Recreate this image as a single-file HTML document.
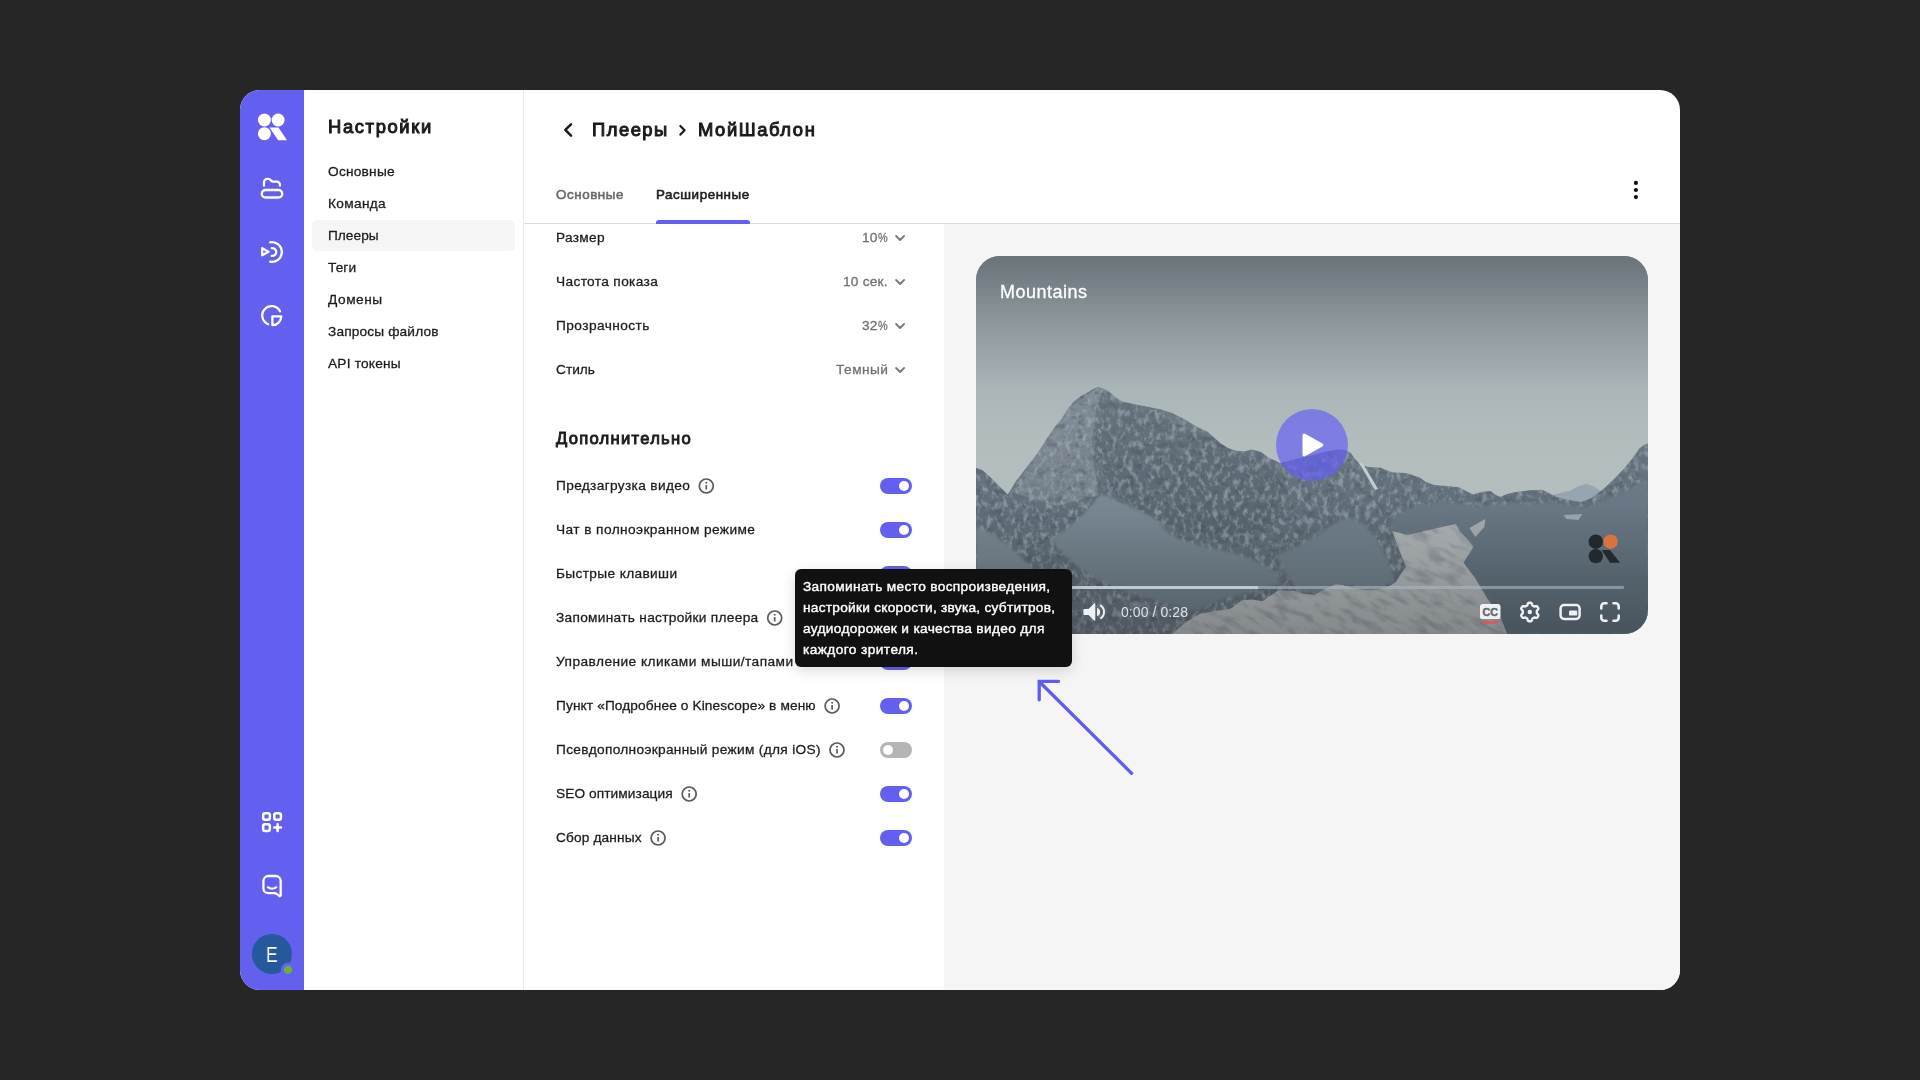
<!DOCTYPE html>
<html lang="ru"><head><meta charset="utf-8"><title>Kinescope — Настройки плеера</title>
<style>
*{margin:0;padding:0;box-sizing:border-box}
html,body{width:1920px;height:1080px;overflow:hidden;background:#262626;font-family:"Liberation Sans", sans-serif}
body{position:relative}
.a{position:absolute}
.t{position:absolute;white-space:nowrap;line-height:1;display:block;will-change:transform;-webkit-text-stroke:.28px}
.pc{display:inline-block;transform:scaleX(.8);transform-origin:0 50%;margin-right:-2.5px}
#card{left:240px;top:90px;width:1440px;height:900px;border-radius:20px;overflow:hidden;background:#fff}
#rail{left:0;top:0;width:64px;height:900px;background:#6360f0}
#vline{left:283px;top:0;width:1px;height:900px;background:#ececec}
#hline{left:284px;top:133px;width:1156px;height:1px;background:#dcdcdc}
#pane{left:704px;top:134px;width:736px;height:766px;background:#f5f5f5}
#navact{left:72px;top:130px;width:203px;height:31px;border-radius:5px;background:#f5f5f5}
#tabul{left:416px;top:130px;width:94px;height:4px;border-radius:3px 3px 0 0;background:#6360f0}
.tg{position:absolute;width:32px;height:16px;border-radius:8px;background:#6360f0}
.tg i{position:absolute;left:19px;top:3px;width:10px;height:10px;border-radius:5px;background:#fff}
.tg.off{background:#b5b5b5}
.tg.off i{left:3px}
#tip{left:795px;top:569px;width:277px;height:98px;border-radius:6px;background:#111;box-shadow:0 4px 14px rgba(0,0,0,.14)}
svg{position:absolute;overflow:visible}
</style></head><body>
<div id="card" class="a">
<div id="rail" class="a"></div><div id="vline" class="a"></div>
<div id="pane" class="a"></div><div id="hline" class="a"></div>
<div id="navact" class="a"></div><div id="tabul" class="a"></div>
</div>
<div class="tg" style="left:880px;top:478px"><i></i></div>
<div class="tg" style="left:880px;top:522px"><i></i></div>
<div class="tg" style="left:880px;top:566px"><i></i></div>
<div class="tg" style="left:880px;top:610px"><i></i></div>
<div class="tg" style="left:880px;top:654px"><i></i></div>
<div class="tg" style="left:880px;top:698px"><i></i></div>
<div class="tg off" style="left:880px;top:742px"><i></i></div>
<div class="tg" style="left:880px;top:786px"><i></i></div>
<div class="tg" style="left:880px;top:830px"><i></i></div>
<div class="a" id="player" style="left:976px;top:256px;width:672px;height:378px;border-radius:24px;overflow:hidden;background:#7b8790">
<svg style="left:0;top:0" width="672" height="378" viewBox="0 0 672 378">
<defs>
<linearGradient id="sky" x1="0" y1="0" x2="0" y2="1"><stop offset="0" stop-color="#6a7378"/><stop offset=".05" stop-color="#727c82"/><stop offset=".16" stop-color="#8a959a"/><stop offset=".25" stop-color="#99a4a9"/><stop offset=".35" stop-color="#aab5b8"/><stop offset=".5" stop-color="#b3bdbd"/><stop offset="1" stop-color="#b6bfbf"/></linearGradient>
<linearGradient id="bot" x1="0" y1="0" x2="0" y2="1"><stop offset="0" stop-color="#000" stop-opacity="0"/><stop offset="1" stop-color="#000" stop-opacity=".22"/></linearGradient>
<linearGradient id="pb" x1="0" y1="0" x2="0" y2="1"><stop offset="0" stop-color="#7f7ee2"/><stop offset=".55" stop-color="#7b7adf"/><stop offset=".75" stop-color="#6364ca"/><stop offset="1" stop-color="#5f60c6"/></linearGradient>
</defs>
<rect width="672" height="378" fill="url(#sky)"/>
<defs>
<filter id="fleck" x="0" y="0" width="100%" height="100%" color-interpolation-filters="sRGB"><feTurbulence type="fractalNoise" baseFrequency="0.19 0.13" numOctaves="4" seed="7"/><feColorMatrix type="matrix" values="0 0 0 0 .66  0 0 0 0 .71  0 0 0 0 .75  3.4 0 0 0 -1.6"/><feComponentTransfer><feFuncA type="linear" slope=".55"/></feComponentTransfer></filter>
<filter id="dark" x="0" y="0" width="100%" height="100%" color-interpolation-filters="sRGB"><feTurbulence type="fractalNoise" baseFrequency="0.10 0.15" numOctaves="3" seed="21"/><feColorMatrix type="matrix" values="0 0 0 0 .25  0 0 0 0 .30  0 0 0 0 .35  0 3.0 0 0 -1.45"/><feComponentTransfer><feFuncA type="linear" slope=".38"/></feComponentTransfer></filter>
<filter id="streak" x="0" y="0" width="100%" height="100%" color-interpolation-filters="sRGB"><feTurbulence type="fractalNoise" baseFrequency="0.045 0.13" numOctaves="3" seed="3"/><feColorMatrix type="matrix" values="0 0 0 0 .46  0 0 0 0 .49  0 0 0 0 .51  0 0 3.2 0 -1.45"/><feComponentTransfer><feFuncA type="linear" slope=".5"/></feComponentTransfer></filter>
<filter id="soft" x="-2%" y="-2%" width="104%" height="104%"><feGaussianBlur stdDeviation=".7"/></filter>
<filter id="soft2" x="-5%" y="-5%" width="110%" height="110%"><feGaussianBlur stdDeviation="1.6"/></filter>
<linearGradient id="mt" x1="0" y1="0" x2="0" y2="1"><stop offset="0" stop-color="#717e88"/><stop offset=".5" stop-color="#616e79"/><stop offset=".75" stop-color="#606c77"/><stop offset="1" stop-color="#67727c"/></linearGradient>
<linearGradient id="gl" x1="0" y1="0" x2="0" y2="1"><stop offset="0" stop-color="#798993"/><stop offset="1" stop-color="#6b7b86"/></linearGradient>
<linearGradient id="gr" x1="0" y1="0" x2="0" y2="1"><stop offset="0" stop-color="#6a7a86"/><stop offset="1" stop-color="#5b6a76"/></linearGradient>
<clipPath id="cm"><path d="M0.0 211.7L6.0 214.0L14.7 221.5L24.0 231.0L31.8 238.6L36.0 232.0L39.0 226.4L47.0 216.0L56.0 204.4L63.0 195.0L70.9 182.4L78.0 172.0L85.5 162.9L91.0 154.0L97.7 145.8L105.0 140.0L112.4 136.0L117.0 133.0L122.2 131.1L127.0 132.5L132.0 134.8L139.0 141.0L146.6 145.8L158.0 148.0L171.0 150.7L183.0 153.0L195.5 156.8L208.0 163.0L220.0 170.2L232.0 176.0L244.4 187.3L252.0 192.0L259.0 194.6L268.0 195.5L276.0 193.4L285.0 196.0L293.0 202.0L299.0 204.5L304.0 207.0L312.0 205.0L322.0 202.5L336.0 199.0L350.0 195.5L362.0 193.5L369.0 194.0L374.6 196.7L379.0 203.0L384.9 209.3L392.0 211.0L404.4 211.8L416.6 216.6L430.0 217.0L443.5 221.5L450.0 226.0L458.2 228.9L470.0 230.0L482.6 231.3L490.0 235.0L497.3 238.6L505.0 236.0L514.4 235.0L519.0 238.5L524.2 241.0L531.0 238.0L538.8 236.2L552.0 234.5L565.7 233.7L573.0 237.0L580.4 241.0L592.0 244.0L604.8 246.0L611.0 244.0L617.0 241.0L623.0 236.5L629.3 231.3L638.0 223.0L648.8 211.8L656.0 203.0L663.5 192.2L668.0 189.0L672.0 187.3L672.0 378.0L0.0 378.0Z"/></clipPath>
<clipPath id="csnow"><path d="M416.2 275.0L432.0 279.0L461.7 272.0L479.6 268.0L483.5 275.0L491.5 283.0L497.4 290.8L487.5 306.7L499.4 322.5L511.3 342.4L525.1 362.2L531.0 378.0L196.0 378.0L210.0 366.0L224.0 357.8L240.0 355.0L255.0 352.5L265.7 344.2L276.0 343.5L286.5 345.3L294.0 340.0L302.0 334.8L317.8 334.8L328.0 338.0L338.6 339.0L349.0 333.0L359.4 328.6L367.0 329.0L375.0 331.7L388.0 334.0L401.0 333.8L412.0 331.0L420.0 326.0L425.0 318.0L430.0 310.7L424.0 296.0Z"/></clipPath>
</defs>
<g filter="url(#soft)">
<path d="M560 250L578.7 238.3L594.5 234.4L603 230L610.4 227.8L618.3 230.4L626 236L640 240L672 240V260H560Z" fill="#96a5b0"/>
<path d="M0.0 211.7L6.0 214.0L14.7 221.5L24.0 231.0L31.8 238.6L36.0 232.0L39.0 226.4L47.0 216.0L56.0 204.4L63.0 195.0L70.9 182.4L78.0 172.0L85.5 162.9L91.0 154.0L97.7 145.8L105.0 140.0L112.4 136.0L117.0 133.0L122.2 131.1L127.0 132.5L132.0 134.8L139.0 141.0L146.6 145.8L158.0 148.0L171.0 150.7L183.0 153.0L195.5 156.8L208.0 163.0L220.0 170.2L232.0 176.0L244.4 187.3L252.0 192.0L259.0 194.6L268.0 195.5L276.0 193.4L285.0 196.0L293.0 202.0L299.0 204.5L304.0 207.0L312.0 205.0L322.0 202.5L336.0 199.0L350.0 195.5L362.0 193.5L369.0 194.0L374.6 196.7L379.0 203.0L384.9 209.3L392.0 211.0L404.4 211.8L416.6 216.6L430.0 217.0L443.5 221.5L450.0 226.0L458.2 228.9L470.0 230.0L482.6 231.3L490.0 235.0L497.3 238.6L505.0 236.0L514.4 235.0L519.0 238.5L524.2 241.0L531.0 238.0L538.8 236.2L552.0 234.5L565.7 233.7L573.0 237.0L580.4 241.0L592.0 244.0L604.8 246.0L611.0 244.0L617.0 241.0L623.0 236.5L629.3 231.3L638.0 223.0L648.8 211.8L656.0 203.0L663.5 192.2L668.0 189.0L672.0 187.3L672.0 378.0L0.0 378.0Z" fill="url(#mt)"/>
<g clip-path="url(#cm)"><path d="M122.5 131L87.5 155.5L63 194L35 236L80.5 250L122.5 239.5L115.5 194Z" fill="#fff" opacity=".12"/><path d="M122.5 131L182 159L245 187L297.5 215L315 239.5L297.5 271L245 288.5L182 264L140 239.5L119 194Z" fill="#000" opacity=".07"/></g>
<g clip-path="url(#cm)"><rect width="672" height="378" filter="url(#dark)"/><rect width="672" height="378" filter="url(#fleck)"/></g>
<g filter="url(#soft2)">
<path d="M125.9 238.5L140.0 245.0L157.4 252.7L177.9 262.1L188.0 272.0L196.8 281.0L212.0 286.0L228.2 290.5L248.0 295.0L267.6 300.0L285.0 308.0L300.0 315.7L304.0 328.0L250.0 342.0L220.0 354.0L180.0 345.0L140.0 332.0L110.2 315.7L90.0 300.0L75.6 284.2L88.1 274.7L103.9 262.1L116.5 248.0Z" fill="url(#gl)"/>
<path d="M0.0 272.0L14.0 276.0L30.0 288.0L48.0 304.0L66.0 326.0L76.0 345.0L70.0 378.0L0.0 378.0Z" fill="#76848e"/>
<path d="M300.0 300.0L318.0 292.0L338.0 282.0L355.0 270.0L372.0 262.0L386.0 268.0L398.0 280.0L410.0 300.0L418.0 325.0L400.0 335.0L370.0 328.0L342.0 338.0L320.0 333.0Z" fill="#6e7e89"/>
<path d="M416.0 262.0L440.0 250.0L470.0 246.0L500.0 250.0L540.0 248.0L580.0 247.0L610.0 252.0L640.0 240.0L672.0 224.0L672.0 378.0L531.0 378.0L511.3 342.4L499.4 322.5L487.5 306.7L497.4 290.8L491.5 283.0L483.5 275.0L479.6 268.0L461.7 272.0L432.0 279.0L416.2 275.0Z" fill="url(#gr)"/>
</g>
<path d="M416.2 275.0L432.0 279.0L461.7 272.0L479.6 268.0L483.5 275.0L491.5 283.0L497.4 290.8L487.5 306.7L499.4 322.5L511.3 342.4L525.1 362.2L531.0 378.0L196.0 378.0L210.0 366.0L224.0 357.8L240.0 355.0L255.0 352.5L265.7 344.2L276.0 343.5L286.5 345.3L294.0 340.0L302.0 334.8L317.8 334.8L328.0 338.0L338.6 339.0L349.0 333.0L359.4 328.6L367.0 329.0L375.0 331.7L388.0 334.0L401.0 333.8L412.0 331.0L420.0 326.0L425.0 318.0L430.0 310.7L424.0 296.0Z" fill="#abb0b3"/>
<g clip-path="url(#csnow)"><g transform="rotate(28 360 330)"><rect x="100" y="150" width="560" height="400" filter="url(#streak)"/></g></g>
<path d="M493.4 272L509.3 263L508.3 271L499.4 281Z" fill="#a3abb1"/><path d="M587.6 259.1L606.4 258.1L602.4 264L590.5 263Z" fill="#9aa5ad"/>
<path d="M383 207L386 206L402 233L399 234Z" fill="#c3cad0"/>
</g>
<rect y="250" width="672" height="128" fill="url(#bot)"/>
<rect x="24" y="330" width="624" height="3" rx="1" fill="#a9b6c1" opacity=".62"/><rect x="24" y="330" width="258.3" height="3" rx="1" fill="#d3dae0" opacity=".75"/>
<circle cx="336" cy="189" r="36" fill="#635cf7" fill-opacity=".66"/><path d="M328.2 179.2V198.8L345.6 189Z" fill="#fff" stroke="#fff" stroke-width="3.4" stroke-linejoin="round"/>
<g fill="#23282c"><circle cx="619.8" cy="285.7" r="7.2"/><circle cx="619.8" cy="300.1" r="7.2"/><path d="M625.7 294H634L644 306.8H634Z"/></g><circle cx="634.6" cy="285.7" r="7.2" fill="#d9733f"/>
<g fill="#eef0f2"><path d="M108.3 353H112.5L118 347.6C118.6 347 119.3 347.4 119.3 348.2V363.8C119.3 364.6 118.6 365 118 364.4L112.5 359H108.3C107.7 359 107.4 358.6 107.4 358V354C107.4 353.4 107.7 353 108.3 353Z"/><path d="M121 351.8C123.1 352.7 124.2 354.2 124.2 356S123.1 359.3 121 360.2Z"/><path d="M124.7 348.2C127.5 349.8 129 352.7 129 355.9S127.5 362 124.7 363.6L123.8 361.8C125.8 360.6 127 358.4 127 355.9S125.8 351.2 123.8 350Z"/></g>
<rect x="504" y="348" width="20.5" height="15" rx="2.6" fill="#eef0f2"/><rect x="506" y="365.2" width="16" height="2.6" rx="1" fill="#e2525e"/>
<text x="514.3" y="360.1" font-family="Liberation Sans, sans-serif" font-weight="700" font-size="11.5" text-anchor="middle" fill="#5f6971" stroke="#5f6971" stroke-width=".45" textLength="15.5" lengthAdjust="spacingAndGlyphs">CC</text>
<path d="M553.80 346.70L554.21 346.71L554.61 346.76L555.00 346.85L555.38 347.04L555.70 347.45L555.91 348.13L556.07 348.81L556.26 349.23L556.51 349.47L556.77 349.64L557.03 349.79L557.30 349.94L557.56 350.09L557.83 350.25L558.11 350.39L558.43 350.48L558.90 350.44L559.56 350.24L560.26 350.08L560.77 350.15L561.12 350.38L561.40 350.68L561.64 351.01L561.85 351.35L562.05 351.71L562.21 352.08L562.33 352.47L562.35 352.89L562.15 353.37L561.67 353.89L561.16 354.37L560.90 354.75L560.81 355.08L560.80 355.39L560.80 355.69L560.80 356.00L560.80 356.31L560.80 356.61L560.81 356.92L560.90 357.25L561.16 357.63L561.67 358.11L562.15 358.63L562.35 359.11L562.33 359.53L562.21 359.92L562.05 360.29L561.85 360.65L561.64 360.99L561.40 361.32L561.12 361.62L560.77 361.85L560.26 361.92L559.56 361.76L558.90 361.56L558.43 361.52L558.11 361.61L557.83 361.75L557.56 361.91L557.30 362.06L557.03 362.21L556.77 362.36L556.51 362.53L556.26 362.77L556.07 363.19L555.91 363.87L555.70 364.55L555.38 364.96L555.00 365.15L554.61 365.24L554.21 365.29L553.80 365.30L553.39 365.29L552.99 365.24L552.60 365.15L552.22 364.96L551.90 364.55L551.69 363.87L551.53 363.19L551.34 362.77L551.09 362.53L550.83 362.36L550.57 362.21L550.30 362.06L550.04 361.91L549.77 361.75L549.49 361.61L549.17 361.52L548.70 361.56L548.04 361.76L547.34 361.92L546.83 361.85L546.48 361.62L546.20 361.32L545.96 360.99L545.75 360.65L545.55 360.29L545.39 359.92L545.27 359.53L545.25 359.11L545.45 358.63L545.93 358.11L546.44 357.63L546.70 357.25L546.79 356.92L546.80 356.61L546.80 356.31L546.80 356.00L546.80 355.69L546.80 355.39L546.79 355.08L546.70 354.75L546.44 354.37L545.93 353.89L545.45 353.37L545.25 352.89L545.27 352.47L545.39 352.08L545.55 351.71L545.75 351.35L545.96 351.01L546.20 350.68L546.48 350.38L546.83 350.15L547.34 350.08L548.04 350.24L548.70 350.44L549.17 350.48L549.49 350.39L549.77 350.25L550.04 350.09L550.30 349.94L550.57 349.79L550.83 349.64L551.09 349.47L551.34 349.23L551.53 348.81L551.69 348.13L551.90 347.45L552.22 347.04L552.60 346.85L552.99 346.76L553.39 346.71L553.80 346.70Z" fill="none" stroke="#eef0f2" stroke-width="2.4" stroke-linejoin="round"/><circle cx="553.8" cy="356.0" r="2.2" fill="#eef0f2"/>
<rect x="584.6" y="349.1" width="19" height="13.8" rx="3.4" fill="none" stroke="#eef0f2" stroke-width="2.5"/><rect x="593" y="354.6" width="8.2" height="5" rx="1.2" fill="#eef0f2"/>
<g fill="none" stroke="#eef0f2" stroke-width="2.6" stroke-linecap="round"><path d="M625.3 352.5V350.3A3 3 0 0 1 628.3 347.3H630.5"/><path d="M637.5 347.3H639.7A3 3 0 0 1 642.7 350.3V352.5"/><path d="M642.7 359.5V361.7A3 3 0 0 1 639.7 364.7H637.5"/><path d="M630.5 364.7H628.3A3 3 0 0 1 625.3 361.7V359.5"/></g>
</svg></div>
<svg class="a" style="left:0;top:0" width="1920" height="1080" viewBox="0 0 1920 1080" fill="none">
<g fill="#fff"><circle cx="264.4" cy="120" r="6.5"/><circle cx="278.1" cy="120" r="6.5"/><circle cx="264.4" cy="133.7" r="6.5"/><path d="M269.6 127.4H278.5L287 140.2H278.1Z"/></g>
<g stroke="#fff" stroke-width="2.3" stroke-linecap="round" stroke-linejoin="round">
<rect x="261.8" y="190" width="20.4" height="7.5" rx="3.75"/>
<path d="M264 185.7V182.4A3.5 3.5 0 0 1 267.5 178.9H268.6C270.4 178.9 270.9 181.6 273.2 181.6H276.6A3.4 3.4 0 0 1 280 185V185.7"/>
<path d="M270.13 242.38 A9.8 9.8 0 1 1 270.13 261.62"/>
<path d="M271.72 248.16 A3.9 3.9 0 1 1 271.72 255.84"/>
<path d="M262.2 248.3V255.3L268.5 251.8Z"/>
<path d="M279.98 311.23 A9.4 9.4 0 1 0 268.08 324.22"/>
<path d="M272.4 316.3H281.3A9 9 0 0 1 272.4 325.2Z"/>
<g stroke-width="2.5"><rect x="263.15" y="813.15" width="6.7" height="6.7" rx="2"/><rect x="274.25" y="813.15" width="6.7" height="6.7" rx="2"/><rect x="263.15" y="824.25" width="6.7" height="6.7" rx="2"/><path d="M277.6 824.2V831M274.2 827.6H281"/></g>
<path d="M280.7 895.1V881A5 5 0 0 0 275.7 876H268.4A5 5 0 0 0 263.4 881V888.2A5 5 0 0 0 268.4 893.2H274.4C275.4 893.2 276.2 893.6 276.9 894.1L279.2 895.8C279.8 896.3 280.7 895.9 280.7 895.1Z"/>
<path d="M267.7 887.2Q272.1 890.2 276.5 887.2" stroke-width="2"/>
</g>
<circle cx="271.9" cy="953.9" r="20" fill="#25599b"/><circle cx="288" cy="969.8" r="7.2" fill="#6360f0"/><circle cx="288" cy="969.8" r="4.2" fill="#6eac45"/>
<g stroke="#1b1b1b" stroke-linecap="round" stroke-linejoin="round"><path d="M571 124.3L565.3 129.9L571 135.6" stroke-width="2.5"/><path d="M680.4 126L684.6 130.3L680.4 134.6" stroke-width="2.2"/></g>
<g fill="#111"><circle cx="1635.9" cy="182.9" r="2.1"/><circle cx="1635.9" cy="190" r="2.1"/><circle cx="1635.9" cy="197.1" r="2.1"/></g>
<g stroke="#777" stroke-width="1.8" stroke-linecap="round" stroke-linejoin="round">
<path d="M896.1 236L900.1 240L904.1 236"/>
<path d="M896.1 280L900.1 284L904.1 280"/>
<path d="M896.1 324L900.1 328L904.1 324"/>
<path d="M896.1 368L900.1 372L904.1 368"/>
</g>
<g stroke="#5a5a5a" stroke-width="1.7" fill="none">
<circle cx="706.3" cy="486.0" r="7.0"/><path d="M706.3 485.1V489.5" stroke-width="1.7"/><circle cx="706.3" cy="482.7" r="1" fill="#5a5a5a" stroke="none"/>
<circle cx="774.7" cy="618.0" r="7.0"/><path d="M774.7 617.1V621.5" stroke-width="1.7"/><circle cx="774.7" cy="614.7" r="1" fill="#5a5a5a" stroke="none"/>
<circle cx="832.1" cy="706.0" r="7.0"/><path d="M832.1 705.1V709.5" stroke-width="1.7"/><circle cx="832.1" cy="702.7" r="1" fill="#5a5a5a" stroke="none"/>
<circle cx="837.0" cy="750.0" r="7.0"/><path d="M837.0 749.1V753.5" stroke-width="1.7"/><circle cx="837.0" cy="746.7" r="1" fill="#5a5a5a" stroke="none"/>
<circle cx="689.2" cy="794.0" r="7.0"/><path d="M689.2 793.1V797.5" stroke-width="1.7"/><circle cx="689.2" cy="790.7" r="1" fill="#5a5a5a" stroke="none"/>
<circle cx="658.1" cy="838.0" r="7.0"/><path d="M658.1 837.1V841.5" stroke-width="1.7"/><circle cx="658.1" cy="834.7" r="1" fill="#5a5a5a" stroke="none"/>
</g>
<g stroke="#5f5cf0" stroke-width="3.3" stroke-linecap="round" stroke-linejoin="miter"><path d="M1131.6 773.3L1039.6 682"/><path d="M1058.6 681.3H1039.2V699.8" stroke-linejoin="miter"/></g>
</svg>
<div id="tip" class="a"></div>
<span class="t" id="h_set" style="left:328.0px;top:118.32px;font-size:18.4px;color:#1b1b1b;-webkit-text-stroke:1.00px;letter-spacing:1.627px;">Настройки</span>
<span class="t" id="nav0" style="left:328.4px;top:164.60px;font-size:13.7px;color:#1b1b1b;letter-spacing:0.235px;">Основные</span>
<span class="t" id="nav1" style="left:328.4px;top:196.60px;font-size:13.7px;color:#1b1b1b;letter-spacing:0.320px;">Команда</span>
<span class="t" id="nav2" style="left:328.4px;top:228.60px;font-size:13.7px;color:#1b1b1b;letter-spacing:0.020px;">Плееры</span>
<span class="t" id="nav3" style="left:328.4px;top:260.60px;font-size:13.7px;color:#1b1b1b;letter-spacing:0.085px;">Теги</span>
<span class="t" id="nav4" style="left:328.4px;top:292.60px;font-size:13.7px;color:#1b1b1b;letter-spacing:0.546px;">Домены</span>
<span class="t" id="nav5" style="left:328.4px;top:324.60px;font-size:13.7px;color:#1b1b1b;letter-spacing:0.150px;">Запросы файлов</span>
<span class="t" id="nav6" style="left:328.4px;top:356.60px;font-size:13.7px;color:#1b1b1b;letter-spacing:0.206px;">API токены</span>
<span class="t" id="bc1" style="left:591.8px;top:121.02px;font-size:18.4px;color:#1b1b1b;-webkit-text-stroke:1.00px;letter-spacing:1.488px;">Плееры</span>
<span class="t" id="bc2" style="left:698.4px;top:121.02px;font-size:18.4px;color:#1b1b1b;-webkit-text-stroke:1.00px;letter-spacing:1.582px;">МойШаблон</span>
<span class="t" id="tab1" style="left:556.1px;top:188.16px;font-size:13.4px;color:#696969;-webkit-text-stroke:0.55px;letter-spacing:0.550px;">Основные</span>
<span class="t" id="tab2" style="left:656.1px;top:188.16px;font-size:13.4px;color:#1b1b1b;-webkit-text-stroke:0.55px;letter-spacing:0.559px;">Расширенные</span>
<span class="t" id="row0" style="left:556.2px;top:230.60px;font-size:13.7px;color:#1b1b1b;letter-spacing:0.291px;">Размер</span>
<span class="t" id="val0" style="left:862.4px;top:230.60px;font-size:13.7px;color:#6f6f6f;letter-spacing:0.247px;">10<span class="pc">%</span></span>
<span class="t" id="row1" style="left:556.2px;top:274.60px;font-size:13.7px;color:#1b1b1b;letter-spacing:0.354px;">Частота показа</span>
<span class="t" id="val1" style="left:843.3px;top:274.60px;font-size:13.7px;color:#6f6f6f;letter-spacing:0.203px;">10 сек.</span>
<span class="t" id="row2" style="left:556.2px;top:318.60px;font-size:13.7px;color:#1b1b1b;letter-spacing:0.431px;">Прозрачность</span>
<span class="t" id="val2" style="left:862.4px;top:318.60px;font-size:13.7px;color:#6f6f6f;letter-spacing:0.247px;">32<span class="pc">%</span></span>
<span class="t" id="row3" style="left:556.2px;top:362.60px;font-size:13.7px;color:#1b1b1b;letter-spacing:-0.005px;">Стиль</span>
<span class="t" id="val3" style="left:835.8px;top:362.60px;font-size:13.7px;color:#6f6f6f;letter-spacing:0.466px;">Темный</span>
<span class="t" id="h_add" style="left:555.8px;top:430.75px;font-size:16.6px;color:#1b1b1b;-webkit-text-stroke:0.90px;letter-spacing:1.272px;">Дополнительно</span>
<span class="t" id="tog0" style="left:556.2px;top:478.60px;font-size:13.7px;color:#1b1b1b;letter-spacing:0.338px;">Предзагрузка видео</span>
<span class="t" id="tog1" style="left:556.2px;top:522.60px;font-size:13.7px;color:#1b1b1b;letter-spacing:0.416px;">Чат в полноэкранном режиме</span>
<span class="t" id="tog2" style="left:556.2px;top:566.60px;font-size:13.7px;color:#1b1b1b;letter-spacing:0.358px;">Быстрые клавиши</span>
<span class="t" id="tog3" style="left:556.2px;top:610.60px;font-size:13.7px;color:#1b1b1b;letter-spacing:0.297px;">Запоминать настройки плеера</span>
<span class="t" id="tog4" style="left:556.2px;top:654.60px;font-size:13.7px;color:#1b1b1b;letter-spacing:0.454px;">Управление кликами мыши/тапами</span>
<span class="t" id="tog5" style="left:556.2px;top:698.60px;font-size:13.7px;color:#1b1b1b;letter-spacing:0.116px;">Пункт «Подробнее о Kinescope» в меню</span>
<span class="t" id="tog6" style="left:556.2px;top:742.60px;font-size:13.7px;color:#1b1b1b;letter-spacing:0.318px;">Псевдополноэкранный режим (для iOS)</span>
<span class="t" id="tog7" style="left:556.2px;top:786.60px;font-size:13.7px;color:#1b1b1b;letter-spacing:0.086px;">SEO оптимизация</span>
<span class="t" id="tog8" style="left:556.2px;top:830.60px;font-size:13.7px;color:#1b1b1b;letter-spacing:0.144px;">Сбор данных</span>
<span class="t" id="tip0" style="left:803.0px;top:579.60px;font-size:13.7px;color:#ffffff;letter-spacing:0.343px;-webkit-text-stroke:.4px;">Запоминать место воспроизведения,</span>
<span class="t" id="tip1" style="left:803.0px;top:600.60px;font-size:13.7px;color:#ffffff;letter-spacing:0.263px;-webkit-text-stroke:.4px;">настройки скорости, звука, субтитров,</span>
<span class="t" id="tip2" style="left:803.0px;top:621.60px;font-size:13.7px;color:#ffffff;letter-spacing:0.329px;-webkit-text-stroke:.4px;">аудиодорожек и качества видео для</span>
<span class="t" id="tip3" style="left:803.0px;top:642.60px;font-size:13.7px;color:#ffffff;letter-spacing:0.415px;-webkit-text-stroke:.4px;">каждого зрителя.</span>
<span class="t" id="ptitle" style="left:1000.0px;top:282.76px;font-size:18px;color:#ffffff;letter-spacing:0.492px;">Mountains</span>
<span class="t" id="ptime" style="left:1121.0px;top:604.55px;font-size:14px;color:#dde1e4;letter-spacing:0.083px;-webkit-text-stroke:0;">0:00 / 0:28</span>
<span class="t" id="ava" style="left:265.7px;top:944.18px;font-size:22px;color:#ffffff;transform:scaleX(.8);transform-origin:0 50%;-webkit-text-stroke:0;">E</span>
</body></html>
